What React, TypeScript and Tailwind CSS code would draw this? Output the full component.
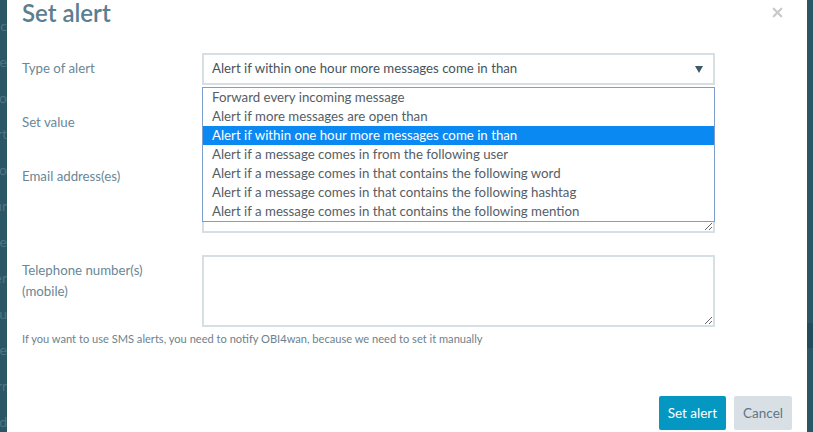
import { X } from 'lucide-react';

const options = [
    'Forward every incoming message',
    'Alert if more messages are open than',
    'Alert if within one hour more messages come in than',
    'Alert if a message comes in from the following user',
    'Alert if a message comes in that contains the following word',
    'Alert if a message comes in that contains the following hashtag',
    'Alert if a message comes in that contains the following mention',
];

// stukjes tekst van de pagina achter de modal
const behind = ['c', 'ne', 'o', 'rt', 'o', 'ur', 'e', 'er', 'u', 'te', 'rr', 'ed'];

export default function App() {
    const selected = 2;

    return (
        <div className="flex h-[432px] w-[813px] overflow-hidden bg-[#2a5666] font-['Lato',sans-serif]">
            {/* pagina achter de overlay */}
            <div className="flex w-[7px] shrink-0 flex-col items-end overflow-hidden pt-[8px] text-[14px] leading-[36px] text-[#4f7482]">
                {behind.map((t, i) => (
                    <span key={i} className="whitespace-nowrap">
                        {t}
                    </span>
                ))}
            </div>

            {/* Modal */}
            <div className="flex w-[800px] shrink-0 flex-col bg-white px-[15px]">
                <div className="flex h-[53px] items-start justify-between">
                    <h3 className="mt-[-2px] text-[24px] leading-[30px] font-semibold text-[#5b7e90]">
                        Set alert
                    </h3>
                    <button className="mt-[5px] mr-[7px] text-[#c9c9c9]">
                        <X className="h-[15px] w-[15px]" strokeWidth={3.6} />
                    </button>
                </div>

                <div className="grid grid-cols-[180px_513px] text-[13.25px] text-[#6a8797]">
                    {/* Type of alert */}
                    <div className="flex h-[32px] items-center">Type of alert</div>
                    <div className="relative mb-[22px]">
                        <div className="flex h-[32px] items-center justify-between border-2 border-[#d6e0e4] bg-white pr-[10px] pl-[8px] text-[#46545e]">
                            <span>{options[selected]}</span>
                            <svg width="8" height="7" viewBox="0 0 8 7">
                                <path d="M0 0 H8 L4 7 Z" fill="#3e5a69" />
                            </svg>
                        </div>

                        {/* geopende lijst */}
                        <ul className="absolute top-[34px] left-0 z-10 w-[513px] border border-[#7d9dd1] bg-white text-[#555e66]">
                            {options.map((o, i) => (
                                <li
                                    key={o}
                                    className={
                                        i === selected
                                            ? 'flex h-[19px] items-center bg-[#0b89f2] pl-[9px] text-white'
                                            : 'flex h-[19px] items-center pl-[9px]'
                                    }
                                >
                                    {o}
                                </li>
                            ))}
                        </ul>
                    </div>

                    {/* Set value */}
                    <div className="flex h-[32px] items-center">Set value</div>
                    <div className="mb-[22px]">
                        <input className="h-[32px] w-full border-2 border-[#d6e0e4] bg-white outline-none" />
                    </div>

                    {/* Email */}
                    <div className="pt-[5px] leading-[21px]">Email address(es)</div>
                    <div className="mb-[22px] flex">
                        <textarea className="h-[72px] w-full border-2 border-[#d6e0e4] bg-white outline-none" />
                    </div>

                    {/* Telefoon */}
                    <div className="pt-[5px] leading-[21px]">
                        Telephone number(s)
                        <br />
                        (mobile)
                    </div>
                    <div className="flex">
                        <textarea className="h-[72px] w-full border-2 border-[#d6e0e4] bg-white outline-none" />
                    </div>
                </div>

                <p className="mt-[4px] text-[11.1px] leading-[16px] text-[#6d828e]">
                    If you want to use SMS alerts, you need to notify OBI4wan, because we need to set it manually
                </p>

                <div className="mt-auto mb-[2px] flex justify-end gap-[8px]">
                    <button className="h-[34px] rounded-[2px] bg-[#0497c1] px-[9px] text-[13.5px] text-white">
                        Set alert
                    </button>
                    <button className="h-[34px] rounded-[2px] bg-[#d8e0e5] px-[9px] text-[13.5px] text-[#5e7685]">
                        Cancel
                    </button>
                </div>
            </div>

            {/* rechter rand */}
            <div className="flex flex-1 flex-col">
                <div className="mt-[323px] h-[25px] bg-[#244b59]" />
            </div>
        </div>
    );
}
